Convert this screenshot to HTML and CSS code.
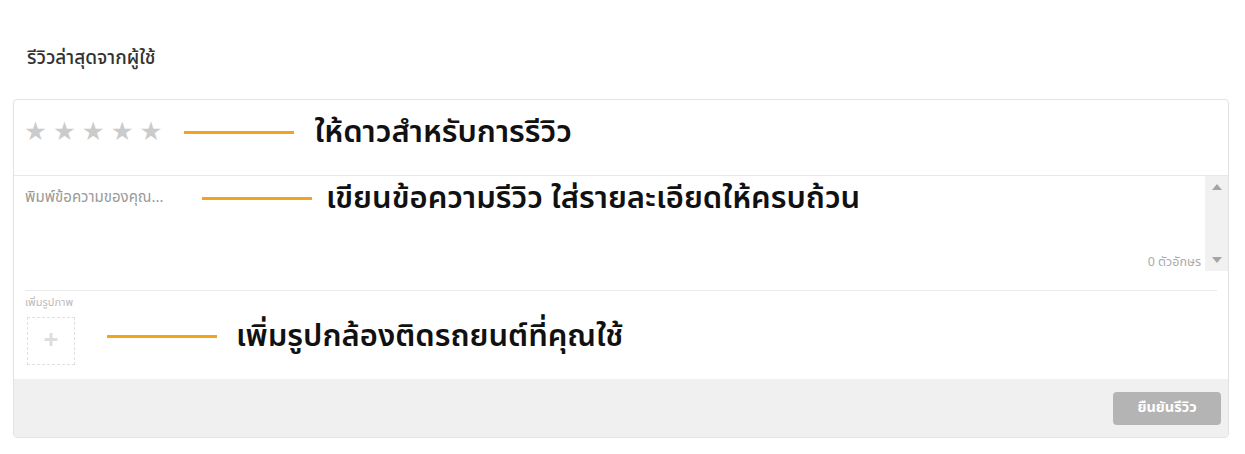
FILE: index.html
```html
<!DOCTYPE html>
<html lang="th">
<head>
    <meta charset="UTF-8">
    <title>รีวิวล่าสุดจากผู้ใช้</title>
    <link rel="stylesheet" href="styles.css">
</head>
<body>
    <div class="page">
        <h2 class="title">รีวิวล่าสุดจากผู้ใช้</h2>
        <div class="review-box">
            <div class="stars-row">
                <div class="stars">
                    <span>★</span><span>★</span><span>★</span><span>★</span><span>★</span>
                </div>
                <div class="note note-stars">
                    <span class="line"></span>
                    <span class="note-text">ให้ดาวสำหรับการรีวิว</span>
                </div>
            </div>
            <div class="text-row">
                <div class="text-area">
                    <span class="placeholder">พิมพ์ข้อความของคุณ...</span>
                    <div class="note note-text-area">
                        <span class="line"></span>
                        <span class="note-text">เขียนข้อความรีวิว ใส่รายละเอียดให้ครบถ้วน</span>
                    </div>
                    <span class="counter">0 ตัวอักษร</span>
                </div>
                <div class="scrollbar">
                    <span class="arrow up"></span>
                    <span class="arrow down"></span>
                </div>
            </div>
            <div class="photo-row">
                <div class="photo-label">เพิ่มรูปภาพ</div>
                <div class="photo-line">
                    <div class="add-photo">+</div>
                    <div class="note note-photo">
                        <span class="line"></span>
                        <span class="note-text">เพิ่มรูปกล้องติดรถยนต์ที่คุณใช้</span>
                    </div>
                </div>
            </div>
            <div class="footer">
                <button class="submit">ยืนยันรีวิว</button>
            </div>
        </div>
    </div>
</body>
</html>
```
FILE: styles.css
```css
body {
    margin: 0;
    padding: 0;
    background: #fff;
    font-family: "Noto Sans Thai", "Noto Sans", "DejaVu Sans", sans-serif;
    color: #333;
}
.page {
    padding: 44px 16px 16px 13px;
}
.title {
    margin: 0 0 25px 14px;
    font-size: 19px;
    font-weight: 500;
    color: #333;
    line-height: 30px;
}
.review-box {
    border: 1px solid #e2e2e2;
    border-radius: 4px;
    overflow: hidden;
}
.stars-row {
    display: flex;
    align-items: center;
    height: 65px;
    padding-left: 10px;
    padding-bottom: 10px;
    border-bottom: 1px solid #e8e8e8;
}
.stars {
    display: flex;
    gap: 6px;
    color: #cbcbcb;
    font-size: 25.5px;
    line-height: 1;
}
.note {
    display: flex;
    align-items: center;
}
.line {
    display: inline-block;
    height: 3px;
    width: 110px;
    background: #f0a51c;
}
.note-text {
    font-size: 31px;
    font-weight: 600;
    color: #111;
}
.note-stars {
    margin-left: 22px;
    gap: 20px;
}
.text-row {
    display: flex;
    height: 95px;
}
.text-area {
    flex: 1;
    position: relative;
    padding: 9px 11px;
}
.placeholder {
    font-size: 15px;
    color: #999;
}
.note-text-area {
    position: absolute;
    left: 188px;
    top: -1px;
    gap: 14px;
}
.counter {
    position: absolute;
    right: 4px;
    bottom: -1px;
    font-size: 12.5px;
    color: #aaa;
}
.scrollbar {
    width: 23px;
    background: #f1f1f1;
    display: flex;
    flex-direction: column;
    justify-content: space-between;
    align-items: center;
    padding: 8px 0;
}
.arrow {
    width: 0;
    height: 0;
    border-left: 5px solid transparent;
    border-right: 5px solid transparent;
}
.arrow.up {
    border-bottom: 6px solid #a5a5a5;
}
.arrow.down {
    border-top: 6px solid #a5a5a5;
}
.photo-row {
    margin: 0 11px;
    border-top: 1px solid #eaeaea;
    margin-top: 19px;
    padding: 6px 0 14px;
}
.photo-label {
    font-size: 11px;
    color: #bbb;
    line-height: 12px;
}
.photo-line {
    display: flex;
    align-items: center;
    margin-top: 8px;
}
.add-photo {
    width: 46px;
    height: 46px;
    margin-left: 2px;
    border: 1px dashed #e0e0e0;
    display: flex;
    align-items: center;
    justify-content: center;
    color: #ddd;
    font-size: 26px;
    font-weight: bold;
}
.note-photo {
    margin-left: 32px;
    margin-top: -10px;
    gap: 19px;
}
.footer {
    background: #f0f0f0;
    height: 58px;
    display: flex;
    justify-content: flex-end;
    align-items: center;
    padding-right: 7px;
}
.submit {
    width: 108px;
    height: 33px;
    border: none;
    border-radius: 4px;
    background: #b4b4b4;
    color: #fff;
    font-family: inherit;
    font-size: 14.5px;
    font-weight: bold;
}
```
